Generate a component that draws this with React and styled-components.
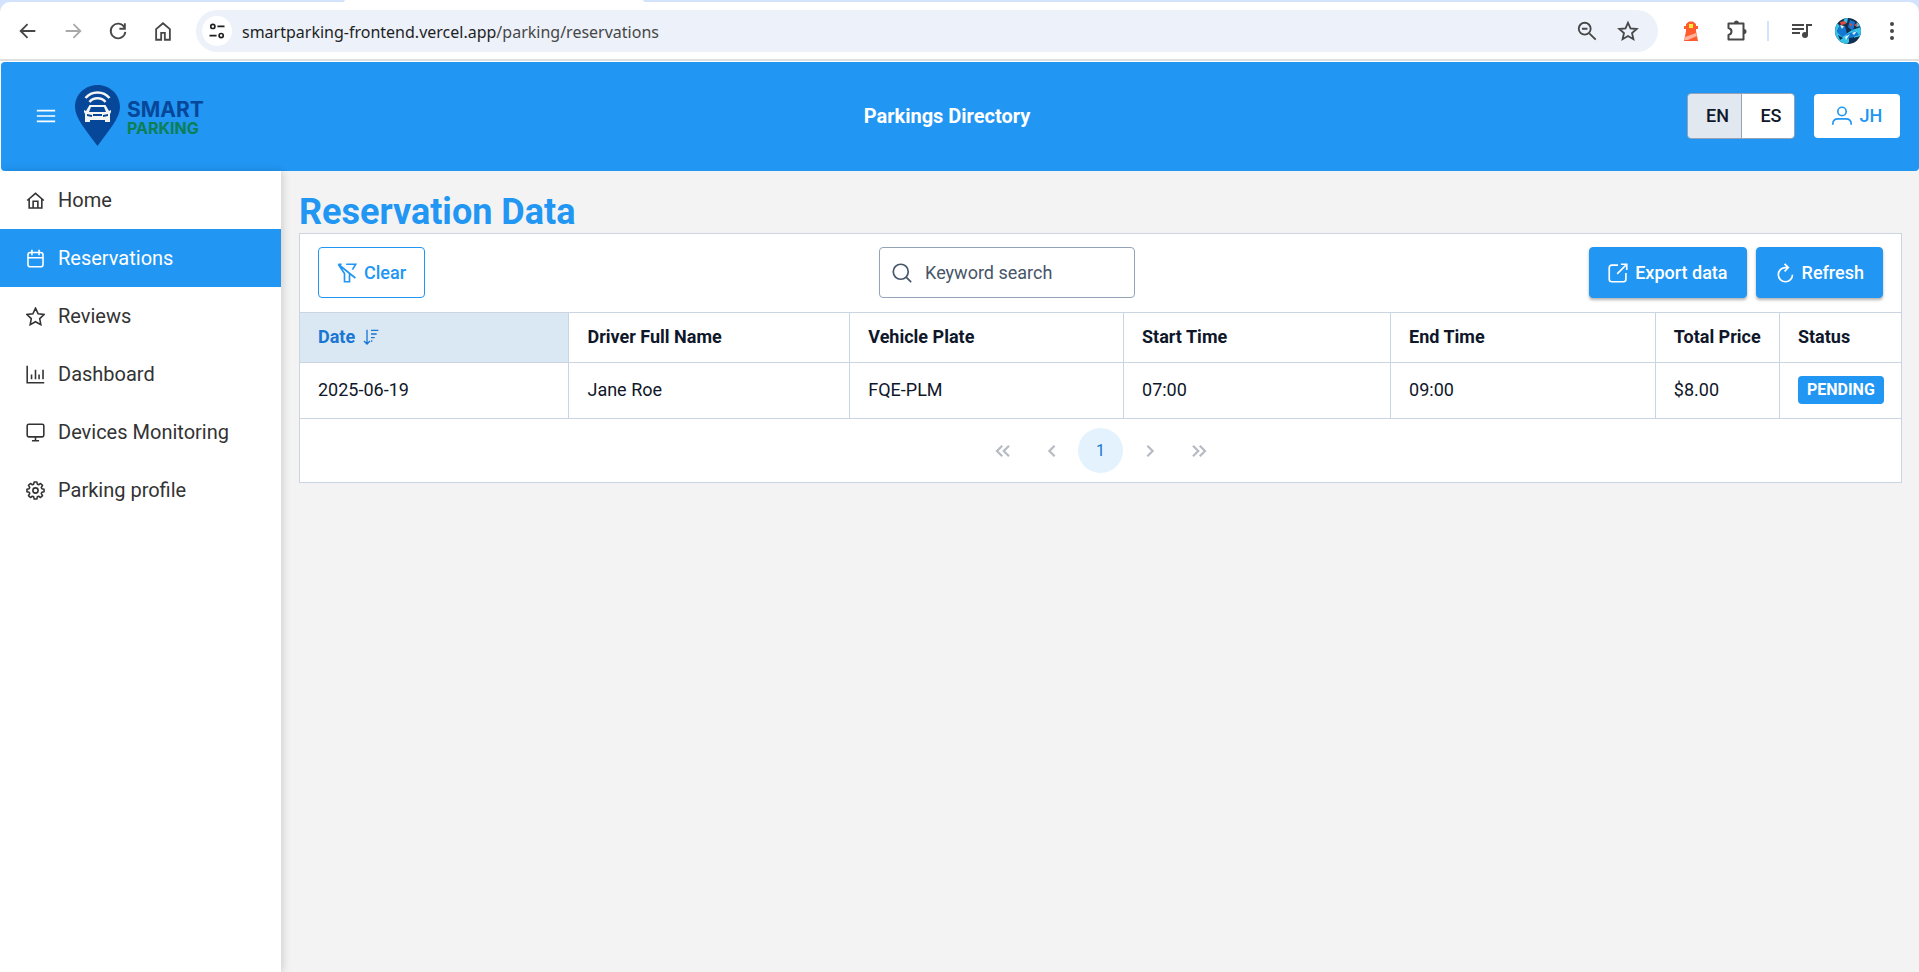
import React, { useState } from "react";
import styled, { createGlobalStyle, css } from "styled-components";

const blue = "#2196f3";
const line = "#cbd5e1";
const ink = "#0f172a";

const GlobalStyle = createGlobalStyle`
  *, *::before, *::after { box-sizing: border-box; }
  html, body { margin: 0; }
  body {
    background: #f3f3f3;
    color: ${ink};
    font-family: Roboto, "Liberation Sans", sans-serif;
    font-size: 18px;
    line-height: 24px;
  }
  button, input { font: inherit; margin: 0; }
`;

const Page = styled.div`
  display: flex;
  flex-direction: column;
  min-height: 100vh;
`;

/* Browser frame */

const BrowserFrame = styled.div`
  background: #d3e3fd;
  padding-top: 2px;
`;

const ActiveTab = styled.div`
  width: 300px;
  height: 2px;
  margin: -2px 0 0 344px;
  background: #fff;
  border-radius: 2px 2px 0 0;
`;

const BrowserBar = styled.div`
  display: flex;
  align-items: center;
  height: 57px;
  padding: 0 10px 0 12px;
  background: #fff;
  border-radius: 10px 10px 0 0;
`;

const BrowserGroup = styled.div`
  display: flex;
  align-items: center;
  gap: ${(p) => p.$gap}px;
`;

const GhostButton = styled.button`
  display: grid;
  place-items: center;
  width: ${(p) => p.$width || 32}px;
  height: 32px;
  padding: 0;
  border: 0;
  background: none;
  color: ${(p) => (p.$muted ? "#a9a9a9" : "#474747")};
`;

const AddressBar = styled.div`
  display: flex;
  align-items: center;
  flex: 1;
  height: 42px;
  margin: 0 17px;
  padding: 0 14px 0 6px;
  background: #ecf1fa;
  border-radius: 21px;
`;

const SiteInfo = styled(GhostButton)`
  width: 30px;
  height: 30px;
  background: #fff;
  border-radius: 50%;
  color: #1f1f1f;
`;

const Url = styled.span`
  flex: 1;
  margin-left: 10px;
  padding-top: 2px;
  font-family: "Noto Sans", sans-serif;
  font-size: 16px;
  color: #474747;
`;

const Host = styled.span`
  color: #1f1f1f;
`;

const BarDivider = styled.span`
  width: 2px;
  height: 20px;
  background: #d3e3fd;
`;

/* Application header */

const HeaderFrame = styled.div`
  padding: 1px 0 0 1px;
  background: #fff;
  border-top: 2px solid #dfe1e1;
`;

const Header = styled.header`
  display: flex;
  justify-content: space-between;
  align-items: center;
  height: 109px;
  padding: 0 19px 2px 33px;
  background: ${blue};
  border-radius: 4px;
`;

const Brand = styled.div`
  display: flex;
  align-items: center;
  gap: 17px;
`;

const MenuButton = styled(GhostButton)`
  width: 24px;
  color: #fff;
`;

const Title = styled.h1`
  margin: 0;
  color: #fff;
  font-size: 20px;
  font-weight: 700;
`;

const HeaderActions = styled.div`
  display: flex;
  align-items: center;
  gap: 19px;
`;

const LanguageGroup = styled.div`
  display: flex;
  border: 1px solid #94a3b8;
  border-radius: 4px;
  overflow: hidden;
`;

const LanguageButton = styled.button`
  width: 53px;
  height: 44px;
  padding: 0 0 0 6px;
  border: 0;
  background: ${(p) => (p.$active ? "#e2e8f0" : "#fff")};
  color: ${ink};
  font-weight: 500;

  & + & { border-left: 1px solid #94a3b8; }
`;

const AccountButton = styled.button`
  display: flex;
  justify-content: center;
  align-items: center;
  gap: 8px;
  width: 86px;
  height: 44px;
  padding: 0;
  border: 0;
  border-radius: 4px;
  background: #fff;
  color: ${blue};
  font-weight: 500;
`;

/* Body */

const Body = styled.div`
  display: flex;
  flex: 1;
`;

const Sidebar = styled.nav`
  flex: 0 0 281px;
  background: #fff;
  box-shadow: 2px 0 8px rgba(0, 0, 0, 0.15);
`;

const NavLink = styled.a`
  display: flex;
  align-items: center;
  gap: 13px;
  height: 58px;
  padding: 0 26px;
  background: ${(p) => (p.$active ? blue : "transparent")};
  color: ${(p) => (p.$active ? "#fff" : "#333")};
  font-size: 20px;
  text-decoration: none;
`;

const Main = styled.main`
  flex: 1;
  min-width: 0;
  padding: 20px 17px 18px 18px;
`;

const Heading = styled.h2`
  margin: 0;
  color: ${blue};
  font-size: 36px;
  line-height: 42px;
  font-weight: 700;
`;

const Panel = styled.section`
  background: #fff;
  border: 1px solid ${line};
`;

const Toolbar = styled.div`
  display: flex;
  justify-content: space-between;
  align-items: center;
  padding: 13px 18px 14px;
`;

const ButtonGroup = styled.div`
  display: flex;
  gap: 9px;
`;

const Button = styled.button`
  display: flex;
  align-items: center;
  gap: 7px;
  height: 51px;
  padding: 0 18px;
  border: 1px solid ${blue};
  border-radius: 4px;
  font-weight: 500;
  ${(p) =>
    p.$outlined
      ? css`
          background: #fff;
          color: ${blue};
        `
      : css`
          background: ${blue};
          color: #fff;
          box-shadow: 0 2px 3px rgba(0, 0, 0, 0.3);
        `}
`;

const SearchField = styled.label`
  display: flex;
  align-items: center;
  gap: 13px;
  width: 256px;
  height: 51px;
  padding: 0 12px;
  border: 1px solid #94a3b8;
  border-radius: 4px;
  color: #475569;
`;

const SearchInput = styled.input`
  flex: 1;
  min-width: 0;
  padding: 0;
  border: 0;
  outline: 0;
  background: none;

  &::placeholder { color: #475569; opacity: 1; }
`;

const Table = styled.table`
  width: 100%;
  border-collapse: collapse;
  table-layout: fixed;
`;

const HeadCell = styled.th`
  height: 50px;
  padding: 0 18px 2px;
  border: 1px solid ${line};
  border-width: 1px 1px 1px 0;
  text-align: left;
  font-weight: 700;
  white-space: nowrap;
  background: ${(p) => (p.$sorted ? "#dae8f3" : "#fff")};
  color: ${(p) => (p.$sorted ? "#1976d2" : ink)};

  &:last-child { border-right: 0; }
`;

const SortButton = styled.button`
  display: flex;
  align-items: center;
  gap: 8px;
  padding: 0;
  border: 0;
  background: none;
  color: inherit;
`;

const Cell = styled.td`
  height: 56px;
  padding: 0 18px 2px;
  border: 1px solid ${line};
  border-width: 1px 1px 1px 0;
  white-space: nowrap;

  &:last-child { border-right: 0; }
`;

const Tag = styled.span`
  display: inline-block;
  padding: 2px 9px;
  border-radius: 4px;
  background: ${blue};
  color: #fff;
  font-size: 16px;
  font-weight: 700;
  vertical-align: middle;
`;

const Pager = styled.nav`
  display: flex;
  justify-content: center;
  align-items: center;
  gap: 4px;
  height: 63px;
`;

const PageButton = styled.button`
  display: grid;
  place-items: center;
  width: 45px;
  height: 45px;
  padding: 0;
  border: 0;
  border-radius: 50%;
  background: ${(p) => (p.$active ? "#e3f2fd" : "transparent")};
  color: ${(p) => (p.$active ? "#1976d2" : "#b7bbc3")};
  font-size: 16px;
`;

/* Drawings */

const iconPaths = {
  back: <path d="M20 12H4.500M11.500 4.500 4 12l7.500 7.500" />,
  forward: <path d="M4 12h15.500M12.500 4.500 20 12l-7.500 7.500" />,
  reload: <path d="M19 8A8 8 0 1 0 20 13M19.500 3.500v6h-6" />,
  chromeHome: <path d="M4.500 10v11.500H10V14h4v7.500h5.500V10L12 3.500z" />,
  tune: <><circle cx="7" cy="6.500" r="2.500" /><path d="M12.500 6.500H21M3 17.500h8.500" /><circle cx="17" cy="17.500" r="2.500" /></>,
  zoomOut: <><circle cx="9.500" cy="9.500" r="6.500" /><path d="m14.500 14.500 7 7M6.500 9.500h6" /></>,
  bookmark: <path d="m12 3 2.700 6.200 6.800.600-5.100 4.500 1.500 6.700-5.900-3.500L6.100 21l1.500-6.700-5.100-4.500 6.800-.600z" />,
  puzzle: <><path d="M3.500 4.500h15v16h-15v-4.500c2-.500 3-1.700 3-3.500s-1-3-3-3.500z" strokeLinejoin="round" /><path d="M9 4a2.500 2.500 0 0 1 5 0zM19 10a2.500 2.500 0 0 1 0 5z" fill="currentColor" stroke="none" /></>,
  menu: <path d="M1 5.500h22M1 12h22M1 18.500h22" />,
  home: <path d="M1.500 12 12 3l10.500 9M4 10v11.500h16V10M9 21.500V13h6v8.500" />,
  calendar: <><rect x="2.500" y="4.500" width="19" height="18" rx="3" /><path d="M2.500 11h19M7.500 1v7M16.500 1v7" /></>,
  star: <path d="m12 1.500 3.300 7 7.500 1-5.500 5.200 1.400 7.600-6.700-3.700-6.700 3.700 1.400-7.600-5.500-5.200 7.500-1z" />,
  chart: <path d="M1.500 1v21.500H23M7 12v6M12 6v12M16.500 12v6M21.500 6v12" />,
  desktop: <><rect x="1.500" y="1.500" width="21" height="16" rx="2" /><path d="M12 17.500v5M7.500 22.500h9" /></>,
  cog: <><path strokeLinejoin="round" d="M9.700 4 10.300 1.200h3.400L14.300 4l1.700.700 2.400-1.600 2.500 2.500L19.300 8l.700 1.700 2.800.600v3.400L20 14.300 19.300 16l1.600 2.400-2.500 2.500-2.400-1.600-1.700.700-.600 2.800h-3.400L9.700 20 8 19.300l-2.400 1.600-2.500-2.500L4.700 16 4 14.300l-2.800-.600v-3.400L4 9.700 4.700 8 3.100 5.600l2.500-2.500L8 4.700z" /><circle cx="12" cy="12" r="3.300" /></>,
  user: <><circle cx="12" cy="6.500" r="5" /><path d="M1 22.500v-1C1 17.500 4 15.500 7.500 15.500h9c3.500 0 6.500 2 6.500 6v1" /></>,
  search: <><circle cx="10.500" cy="10.500" r="9" /><path d="m17 17 6 6" /></>,
  exportBox: <><path d="M12 2.500H4.500a3 3 0 0 0-3 3v14a3 3 0 0 0 3 3h14a3 3 0 0 0 3-3V12M15.500 1.500h7v7M22.500 1.500 11 13" /></>,
  refresh: <path d="M12 5.500h3.500M11.500 1 16 5.500 11.500 10M12 5.500a8.500 8.500 0 1 0 9 8.500" />,
  filterSlash: <path d="M1.500 1.500 22 18M1.500 1.500l7.500 11v10h6v-9M11 1.500h11.500L18.500 8M1.500 1.500h4" />,
  sortDown: <path d="M6 1v21.500M1.500 18 6 22.500l4.500-4.500M12 2h11M12 7.500h8.500M12 13h5.500M12 18h2" />,
  first: <path d="m11 5-7 7 7 7M20 5l-7 7 7 7" />,
  previous: <path d="m15.500 5-7 7 7 7" />,
  next: <path d="m8.500 5 7 7-7 7" />,
  last: <path d="m4 5 7 7-7 7M13 5l7 7-7 7" />,
};

const Icon = ({ name, size = 20, stroke = 2 }) => (
  <svg width={size} height={size} viewBox="0 0 24 24" fill="none" stroke="currentColor" strokeWidth={stroke} aria-hidden="true">
    {iconPaths[name]}
  </svg>
);

const Lighthouse = () => (
  <svg width="16" height="21" viewBox="0 0 16 21" aria-hidden="true">
    <path fill="#ff5b2e" d="M6 1.500h4L13 4v2h2v3h-2v2l2 10H1l2-10V9H1V6h2V4z" />
    <rect x="6" y="4" width="4" height="4" fill="#ffeb3b" />
    <path fill="#ffb199" d="M2 17l11-4 1 3-9 4H1z" />
  </svg>
);

const MusicList = () => (
  <svg width="20" height="16" viewBox="0 0 20 16" aria-hidden="true">
    <path fill="none" stroke="#474747" strokeWidth="2" d="M0 2h12M0 6h12M0 10h8M15 12V2h5" />
    <circle cx="13" cy="12" r="3" fill="#474747" />
  </svg>
);

const Avatar = () => (
  <svg width="26" height="26" viewBox="0 0 26 26" aria-hidden="true">
    <clipPath id="avatar"><circle cx="13" cy="13" r="13" /></clipPath>
    <g clipPath="url(#avatar)">
      <path fill="#142d4c" d="M0 0h26v26H0z" />
      <path fill="#35c3e8" d="M0 3l5 5-3 5 6 5 9-6 9-3v9l-8 2-6 6H5l-5-9zM10 0h3l-1 5-4-1zM22 4l4 4-5 1z" />
      <path fill="#1677d2" d="M4 8h6l2 8-5 3-5-5zM15 2l5 2-2 9-5-4zM12 16l9-3 3 4-12 4z" />
      <path fill="#e5483d" d="M5 4l5-1 1 3-5 1zM14 5l3 1-1 3zM19 7l3-2v4z" />
      <path fill="#d8f5ff" d="M5 7l4 1-2 3zM17 15l5-2-3 4zM10 19l5-3-4 6z" />
      <path fill="#0c3257" d="M14 20l5-1 1 5-6 1zM3 17l5 3-3 2z" />
    </g>
  </svg>
);

const Kebab = () => (
  <svg width="4" height="18" viewBox="0 0 4 18" fill="#474747" aria-hidden="true">
    <circle cx="2" cy="2" r="2" /><circle cx="2" cy="9" r="2" /><circle cx="2" cy="16" r="2" />
  </svg>
);

const LogoSvg = styled.svg`
  display: block;
  font-family: Inter, sans-serif;
  font-weight: 700;
`;

const Logo = () => (
  <LogoSvg width="132" height="62" viewBox="0 0 132 62" role="img" aria-label="Smart Parking">
    <path fill="#07479a" d="M22.500 0C10 0 0 9.500 0 22c0 11 11 23 22.500 39C34 45 45 33 45 22 45 9.500 35 0 22.500 0z" />
    <g fill="none" stroke="#f4f4f2" strokeWidth="2.500">
      <path d="M10.500 13c6-7.500 18-7.500 24 0" />
      <path d="M14.500 17c4-5 12-5 16 0" />
    </g>
    <path fill="#f4f4f2" d="M14.500 20h16l3.500 6 2-1v2l-1 2v8h-5v-2H15v2h-5v-8l-1-2v-2l2 1z" />
    <path fill="#07479a" d="M16 22h13l2 5H14zM12 29l5 1v2l-5-1zM33 29l-5 1v2l5-1zM18 29h9v2h-9z" />
    <text x="52" y="32" fontSize="21" fill="#07479a">SMART</text>
    <text x="52" y="49" fontSize="16" fill="#0c7f55">PARKING</text>
  </LogoSvg>
);

/* Content */

const navItems = [
  { icon: "home", label: "Home" },
  { icon: "calendar", label: "Reservations", active: true },
  { icon: "star", label: "Reviews" },
  { icon: "chart", label: "Dashboard" },
  { icon: "desktop", label: "Devices Monitoring" },
  { icon: "cog", label: "Parking profile" },
];

const columns = [
  { key: "date", label: "Date", width: 1680 },
  { key: "driver", label: "Driver Full Name", width: 1754 },
  { key: "plate", label: "Vehicle Plate", width: 1710 },
  { key: "start", label: "Start Time", width: 1668 },
  { key: "end", label: "End Time", width: 1654 },
  { key: "price", label: "Total Price", width: 775 },
  { key: "status", label: "Status", width: 759 },
];

const Col = styled.col`
  width: ${(p) => p.$share / 100}%;
`;

const reservations = [
  { date: "2025-06-19", driver: "Jane Roe", plate: "FQE-PLM", start: "07:00", end: "09:00", price: "$8.00", status: "PENDING" },
];

const BrowserChrome = () => (
  <BrowserFrame>
    <ActiveTab />
    <BrowserBar>
      <BrowserGroup $gap={13}>
        <GhostButton aria-label="Back"><Icon name="back" size={22} /></GhostButton>
        <GhostButton $muted aria-label="Forward"><Icon name="forward" size={22} /></GhostButton>
        <GhostButton aria-label="Reload"><Icon name="reload" size={22} /></GhostButton>
        <GhostButton aria-label="Home page"><Icon name="chromeHome" size={22} /></GhostButton>
      </BrowserGroup>
      <AddressBar>
        <SiteInfo aria-label="Site information"><Icon name="tune" /></SiteInfo>
        <Url><Host>smartparking-frontend.vercel.app</Host>/parking/reservations</Url>
        <BrowserGroup $gap={9}>
          <GhostButton aria-label="Zoom"><Icon name="zoomOut" size={22} /></GhostButton>
          <GhostButton aria-label="Bookmark"><Icon name="bookmark" size={22} /></GhostButton>
        </BrowserGroup>
      </AddressBar>
      <BrowserGroup $gap={14}>
        <GhostButton aria-label="Lighthouse"><Lighthouse /></GhostButton>
        <GhostButton aria-label="Extensions"><Icon name="puzzle" size={24} /></GhostButton>
        <BarDivider />
        <GhostButton $width={38} aria-label="Media"><MusicList /></GhostButton>
        <GhostButton $width={26} aria-label="Profile"><Avatar /></GhostButton>
        <GhostButton $width={34} aria-label="Browser menu"><Kebab /></GhostButton>
      </BrowserGroup>
    </BrowserBar>
  </BrowserFrame>
);

export default function App() {
  const [language, setLanguage] = useState("EN");
  const [keyword, setKeyword] = useState("");

  return (
    <Page>
      <GlobalStyle />
      <BrowserChrome />
      <HeaderFrame>
        <Header>
          <Brand>
            <MenuButton aria-label="Toggle menu"><Icon name="menu" /></MenuButton>
            <Logo />
          </Brand>
          <Title>Parkings Directory</Title>
          <HeaderActions>
            <LanguageGroup>
              {["EN", "ES"].map((code) => (
                <LanguageButton key={code} $active={language === code} onClick={() => setLanguage(code)}>
                  {code}
                </LanguageButton>
              ))}
            </LanguageGroup>
            <AccountButton><Icon name="user" />JH</AccountButton>
          </HeaderActions>
        </Header>
      </HeaderFrame>
      <Body>
        <Sidebar aria-label="Main">
          {navItems.map((item) => (
            <NavLink key={item.label} href="#" $active={item.active}>
              <Icon name={item.icon} size={19} />{item.label}
            </NavLink>
          ))}
        </Sidebar>
        <Main>
          <Heading>Reservation Data</Heading>
          <Panel>
            <Toolbar>
              <Button $outlined onClick={() => setKeyword("")}><Icon name="filterSlash" />Clear</Button>
              <SearchField>
                <Icon name="search" />
                <SearchInput aria-label="Keyword search" placeholder="Keyword search" value={keyword} onChange={(e) => setKeyword(e.target.value)} />
              </SearchField>
              <ButtonGroup>
                <Button><Icon name="exportBox" />Export data</Button>
                <Button><Icon name="refresh" />Refresh</Button>
              </ButtonGroup>
            </Toolbar>
            <Table>
              <colgroup>
                {columns.map((c) => <Col key={c.key} $share={c.width} />)}
              </colgroup>
              <thead>
                <tr>
                  {columns.map((c) => (
                    <HeadCell key={c.key} scope="col" $sorted={c.key === "date"}>
                      {c.key === "date" ? <SortButton>{c.label}<Icon name="sortDown" size={16} /></SortButton> : c.label}
                    </HeadCell>
                  ))}
                </tr>
              </thead>
              <tbody>
                {reservations.map((r) => (
                  <tr key={r.date + r.plate}>
                    {columns.map((c) => (
                      <Cell key={c.key}>{c.key === "status" ? <Tag>{r.status}</Tag> : r[c.key]}</Cell>
                    ))}
                  </tr>
                ))}
              </tbody>
            </Table>
            <Pager aria-label="Pages">
              <PageButton aria-label="First page"><Icon name="first" size={18} stroke={3} /></PageButton>
              <PageButton aria-label="Previous page"><Icon name="previous" size={18} stroke={3} /></PageButton>
              <PageButton $active>1</PageButton>
              <PageButton aria-label="Next page"><Icon name="next" size={18} stroke={3} /></PageButton>
              <PageButton aria-label="Last page"><Icon name="last" size={18} stroke={3} /></PageButton>
            </Pager>
          </Panel>
        </Main>
      </Body>
    </Page>
  );
}
